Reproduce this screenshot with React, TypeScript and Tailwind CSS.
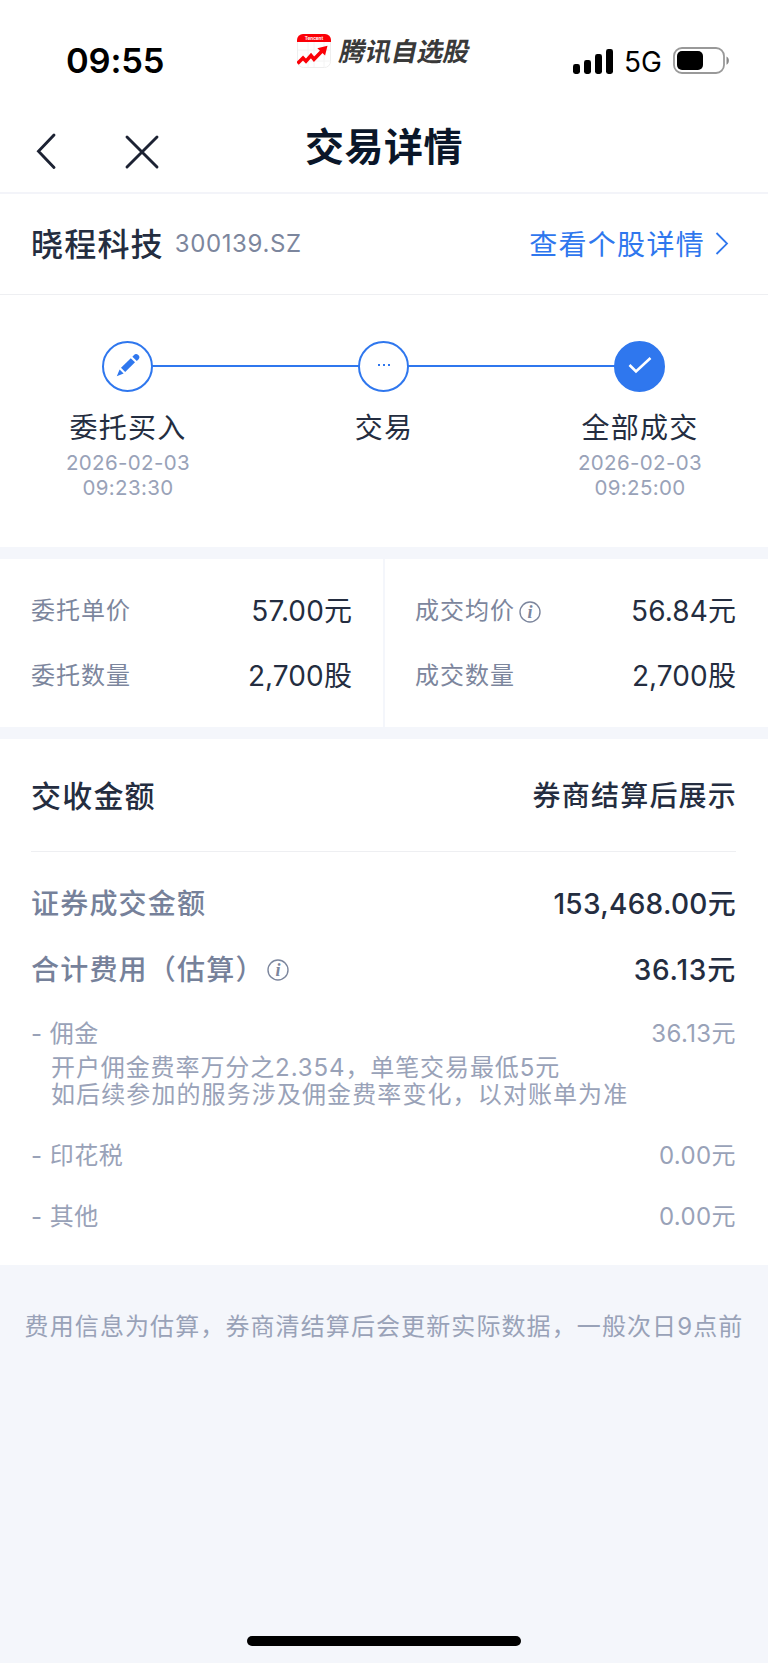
import React from "react";

const FONT = "font-['Inter','Noto_Sans_CJK_SC',sans-serif]";

const StatusBar = () => (
  <div className="flex h-[104px] items-start">
    <div className="w-[297px] pt-[44px] pl-[66px] text-[34.5px] leading-[34px] font-semibold tracking-[-0.2px] text-black">
      09:55
    </div>
    <div className="flex pt-[34px]">
      <AppLogo />
      <span className="mt-px ml-[9px] inline-block -skew-x-12 text-[26px] leading-[34px] font-bold text-[#3a3a3a]">
        腾讯自选股
      </span>
    </div>
    <div className="ml-auto flex items-center pt-[43px] pr-[37px]">
      <svg width="41" height="34" viewBox="0 0 41 34" fill="#000">
        <rect x="0" y="20" width="7" height="10" rx="2.4" />
        <rect x="11" y="16" width="7" height="14" rx="2.4" />
        <rect x="22" y="10" width="7" height="20" rx="2.4" />
        <rect x="33" y="5" width="7" height="25" rx="2.4" />
      </svg>
      <span className="mt-[2px] ml-[10px] text-[28px] leading-[34px] text-black">5G</span>
      <svg className="ml-[11px]" width="58" height="34" viewBox="0 0 58 34">
        <rect x="1" y="4" width="50" height="25" rx="8" fill="none" stroke="#999" strokeWidth="1.8" />
        <rect x="4" y="7" width="26" height="19" rx="5" fill="#000" />
        <path d="M53.5 12.5c3.2 1.6 3.2 6.6 0 8.2z" fill="#888" />
      </svg>
    </div>
  </div>
);

const AppLogo = () => (
  <svg width="34" height="34" viewBox="0 0 34 34">
    <rect x=".5" y=".5" width="33" height="33" rx="6" fill="#fff" stroke="#eee" />
    <path d="M11 8v25M17 8v25M27 8v25M1 16h32M1 27h32" stroke="#f4f4f4" />
    <path d="M0 8V6a6 6 0 0 1 6-6h22a6 6 0 0 1 6 6v2z" fill="#fb0007" />
    <text x="17" y="5.8" fontSize="4.6" fontWeight="700" fill="#fff" textAnchor="middle">
      Tencent
    </text>
    <path d="M.5 29.5 6 24l3 3.2 5-5.6 3 3.6 8.5-8.6" fill="none" stroke="#fb0007" strokeWidth="3.6" />
    <path d="M30.5 11.8 20.3 14.2l7.8 7.2z" fill="#fb0007" />
  </svg>
);

const NavBar = () => (
  <div className="relative flex h-[90px] items-start border-b-2 border-[#f3f4f9]">
    <svg className="mt-[28px] ml-[35px]" width="24" height="40" viewBox="0 0 24 40" fill="none">
      <path d="M19 3 3.5 19.3 19 35.5" stroke="#1c2233" strokeWidth="2.9" strokeLinecap="round" />
    </svg>
    <svg className="mt-[28px] ml-[64px]" width="40" height="40" viewBox="0 0 40 40" fill="none">
      <path d="M4 5l30 30M34 5 4 35" stroke="#1c2233" strokeWidth="2.9" strokeLinecap="round" />
    </svg>
    <h1 className="absolute inset-x-0 top-[23px] text-center text-[39px] leading-[40px] font-semibold tracking-[0.5px] text-[#0a1629]">
      交易详情
    </h1>
  </div>
);

const StockHeader = () => (
  <div className="flex h-[101px] items-center border-b border-[#eeeff2] pt-[2px] pr-8 pl-[31px]">
    <span className="text-[32px] leading-[40px] font-medium tracking-[1.2px] text-[#242d40]">晓程科技</span>
    <span className="mb-[2px] ml-[11px] text-[24px] leading-[40px] tracking-[0.6px] text-[#7c869d]">300139.SZ</span>
    <a className="ml-auto flex items-center text-[28px] leading-[40px] tracking-[1.3px] text-[#2f77ee]">
      查看个股详情
      <svg className="mr-[6px] mb-[3px] ml-[9px]" width="16" height="26" viewBox="0 0 16 26" fill="none">
        <path d="M2.5 2 13 12.6 2.5 23" stroke="#2f77ee" strokeWidth="1.8" />
      </svg>
    </a>
  </div>
);

interface StepProps {
  label: string;
  date?: string;
  time?: string;
  icon: React.ReactNode;
  filled?: boolean;
}

const Step: React.FC<StepProps> = ({ label, date, time, icon, filled }) => (
  <div className="flex w-[256px] flex-col items-center">
    <div
      className={`z-10 mr-px flex h-[51px] w-[51px] items-center justify-center rounded-full border-2 border-[#2f77ee] ${
        filled ? "bg-[#2f77ee]" : "bg-white"
      }`}
    >
      {icon}
    </div>
    <div className="mt-[16px] text-[28px] leading-[40px] tracking-[1.2px] text-[#242d40]">{label}</div>
    <div className="mt-[3px] text-center text-[20.5px] leading-[24.6px] tracking-[0.35px] text-[#99a2b8]">
      <div>{date}</div>
      <div>{time}</div>
    </div>
  </div>
);

const Stepper = () => (
  <div className="relative flex h-[252px] pt-[46px]">
    <div className="absolute top-[70px] right-[128px] left-[128px] h-[2px] bg-[#2f77ee]" />
    <Step
      label="委托买入"
      date="2026-02-03"
      time="09:23:30"
      icon={
        <svg className="mb-[3px]" width="24" height="24" viewBox="0 0 24 24" fill="#2f77ee">
          <path d="M5 14.8 14.8 5.2l4.2 4L9.2 19z" />
          <path d="M16.4 3.8l1.4-1.6a3.1 3.1 0 0 1 4.6 4.3L20.8 8z" />
          <path d="M3.6 16.4l4 4L.8 23.3z" />
        </svg>
      }
    />
    <Step
      label="交易"
      icon={
        <svg className="mb-[3px]" width="14" height="4" viewBox="0 0 14 4" fill="#2f77ee">
          <rect x="1" y="1" width="2" height="2" />
          <rect x="6" y="1" width="2" height="2" />
          <rect x="11" y="1" width="2" height="2" />
        </svg>
      }
    />
    <Step
      label="全部成交"
      date="2026-02-03"
      time="09:25:00"
      filled
      icon={
        <svg className="mb-[3px]" width="24" height="18" viewBox="0 0 24 18" fill="none">
          <path d="M1.5 9 8 15.4 22.5 2" stroke="#fff" strokeWidth="2.6" />
        </svg>
      }
    />
  </div>
);

const InfoIcon = ({ className = "" }: { className?: string }) => (
  <svg className={className} width="22" height="22" viewBox="0 0 22 22">
    <circle cx="11" cy="11" r="10" fill="none" stroke="#7c869d" strokeWidth="1.4" />
    <text
      x="11"
      y="16.5"
      textAnchor="middle"
      className="fill-[#7c869d] font-['Liberation_Serif',serif] text-[18px] font-bold italic"
    >
      i
    </text>
  </svg>
);

interface QuoteRowProps {
  label: string;
  value: string;
  info?: boolean;
}

const QuoteRow: React.FC<QuoteRowProps> = ({ label, value, info }) => (
  <div className="flex h-[65px] items-center">
    <span className="text-[24px] tracking-[1px] text-[#7c869d]">{label}</span>
    {info ? <InfoIcon className="mt-[3px] ml-[4px]" /> : null}
    <span className="ml-auto text-[28px] tracking-[0.1px] text-[#242d40]">{value}</span>
  </div>
);

const Quotes = () => (
  <div className="grid h-[192px] grid-cols-2 border-y-12 border-[#f4f6fb] leading-[40px]">
    <div className="border-r border-[#f4f6fb] pt-[19px] pr-[31px] pl-[31px]">
      <QuoteRow label="委托单价" value="57.00元" />
      <QuoteRow label="委托数量" value="2,700股" />
    </div>
    <div className="border-l border-[#f4f6fb] pt-[19px] pr-8 pl-[30px]">
      <QuoteRow label="成交均价" value="56.84元" info />
      <QuoteRow label="成交数量" value="2,700股" />
    </div>
  </div>
);

const FeeRow = ({ label, value }: { label: string; value: string }) => (
  <div className="flex h-[61px] items-center justify-between text-[24px] font-normal text-[#99a2b8]">
    <span className="tracking-[0.5px]">{label}</span>
    <span className="tracking-[0.4px]">{value}</span>
  </div>
);

const Settlement = () => (
  <div className="h-[526px] pr-8 pl-[31px] leading-[40px] font-medium text-[#242d40]">
    <div className="flex h-[113px] items-center justify-between border-b border-[#eeeff2] pt-[2px]">
      <span className="text-[30px] tracking-[1.2px]">交收金额</span>
      <span className="-mr-px text-[28px] tracking-[1.2px]">券商结算后展示</span>
    </div>
    <div className="mt-[18px] flex h-[67px] items-center justify-between text-[28px]">
      <span className="tracking-[1.2px] text-[#76819a]">证券成交金额</span>
      <span className="tracking-[0.3px]">153,468.00元</span>
    </div>
    <div className="flex h-[66px] items-center text-[28px]">
      <span className="tracking-[1.2px] text-[#76819a]">合计费用（估算）</span>
      <InfoIcon className="ml-[2px]" />
      <span className="ml-auto tracking-[0.8px]">36.13元</span>
    </div>
    <div className="h-[51px]">
      <FeeRow label="- 佣金" value="36.13元" />
    </div>
    <div className="mt-px pl-[20px] text-[24px] leading-[26.6px] font-normal text-[#99a2b8]">
      <p className="tracking-[0.9px]">开户佣金费率万分之2.354，单笔交易最低5元</p>
      <p className="tracking-[1.1px]">如后续参加的服务涉及佣金费率变化，以对账单为准</p>
    </div>
    <div className="mt-[17px]">
      <FeeRow label="- 印花税" value="0.00元" />
      <FeeRow label="- 其他" value="0.00元" />
    </div>
  </div>
);

export default function App() {
  return (
    <div className={`flex h-[1663px] w-[768px] flex-col overflow-hidden bg-white ${FONT}`}>
      <StatusBar />
      <NavBar />
      <StockHeader />
      <Stepper />
      <Quotes />
      <Settlement />
      <div className="flex flex-1 flex-col items-center justify-between bg-[#f4f6fb] pb-[17px]">
        <p className="mt-[42px] text-[24px] leading-[40px] tracking-[1.1px] whitespace-nowrap text-[#99a2b8]">
          费用信息为估算，券商清结算后会更新实际数据，一般次日9点前
        </p>
        <div className="h-[10px] w-[274px] rounded-full bg-black" />
      </div>
    </div>
  );
}
